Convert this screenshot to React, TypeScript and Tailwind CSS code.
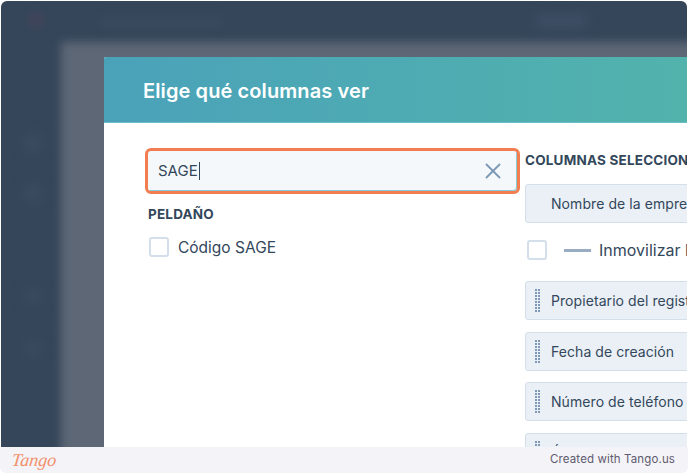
import { X } from "lucide-react";

const font = { fontFamily: '"Inter", "Noto Sans", sans-serif' };

function Grip() {
  return (
    <div className="grid grid-cols-2 gap-[1px] w-[5px] shrink-0 mr-[11px]">
      {Array.from({ length: 16 }).map((_, i) => (
        <span key={i} className="w-[2px] h-[2px] bg-[#7f98b5]" />
      ))}
    </div>
  );
}

function Row({ label, grip = true }: { label: string; grip?: boolean }) {
  return (
    <div className="h-[39px] w-[200px] shrink-0 flex items-center pl-[9px] rounded-[3px] border border-[#d5dfea] bg-[#eaf0f6] text-[14px] tracking-[0.07px] text-[#33475b] whitespace-nowrap overflow-hidden">
      {grip ? <Grip /> : <span className="w-[16px] shrink-0" />}
      <span>{label}</span>
    </div>
  );
}

function Check() {
  return <span className="block w-[20px] h-[20px] shrink-0 rounded-[3px] border-2 border-[#d3dfea] bg-white" />;
}

export default function App() {
  return (
    <div className="w-[688px] h-[473px] overflow-hidden bg-white flex flex-col" style={font}>
      <div className="relative h-[446px] shrink-0 overflow-hidden rounded-t-[6px] ml-px mr-px mt-px">
        <div className="absolute inset-0 bg-[#35465a] overflow-hidden">
          <div className="absolute left-[60px] top-[41px] right-[-20px] bottom-[-20px] bg-[#5d6776] blur-[5px]" />
          <div className="absolute left-[28px] top-[12px] w-[14px] h-[14px] rounded-full bg-[#45445a] blur-[5px]" />
          <div className="absolute left-[100px] top-[17px] w-[120px] h-[8px] bg-[#3b4c60] blur-[5px]" />
          <div className="absolute left-[535px] top-[14px] w-[50px] h-[12px] bg-[#3e5064] blur-[6px]" />
          <div className="absolute left-[22px] top-[132px] w-[20px] h-[20px] rounded-full bg-[#3a4c60] blur-[6px]" />
          <div className="absolute left-[22px] top-[182px] w-[20px] h-[20px] rounded-full bg-[#3a4c60] blur-[6px]" />
          <div className="absolute left-[22px] top-[285px] w-[20px] h-[20px] rounded-full bg-[#394a5e] blur-[6px]" />
          <div className="absolute left-[22px] top-[338px] w-[20px] h-[20px] rounded-full bg-[#394a5e] blur-[6px]" />
        </div>

        <div className="relative pl-[103px] pt-[56px] h-full">
          <div className="w-[590px] h-[390px] bg-white rounded-tl-[2px] overflow-hidden">
            <div className="h-[66px] flex items-center pl-[39px] pt-[2px] bg-gradient-to-r from-[#4aa2b9] to-[#52b3ac] border-b border-[#6cbfc9]">
              <h1 className="text-[20px] font-semibold text-white tracking-[0.1px]">Elige qué columnas ver</h1>
            </div>
            <div className="flex pl-[41px] pt-[25px]">
              <div className="w-[375px] shrink-0">
                <div className="h-[46px] w-[375px] rounded-[6px] border-[3px] border-[#f27d51] bg-[#f5f8fa] flex items-center pl-[10px] pr-[12px] shadow-[inset_-1px_-1px_0_0_#8ccbd6]">
                  <span className="text-[15px] text-[#33475b] leading-none pb-[1px]">SAGE</span>
                  <span className="w-px h-[18px] bg-[#33475b] ml-px" />
                  <X className="ml-auto -mr-px text-[#7c98b6]" size={26} strokeWidth={1.7} />
                </div>
                <div className="mt-[12px] ml-[3px] text-[13.5px] font-bold tracking-[0.2px] text-[#33475b] leading-[17px]">PELDAÑO</div>
                <div className="mt-[12px] ml-[4px] flex items-center gap-[9px]">
                  <Check />
                  <span className="text-[15.5px] text-[#33475b] pt-[1px]">Código SAGE</span>
                </div>
              </div>
              <div className="ml-[5px] w-[200px] shrink-0 flex flex-col">
                <div className="text-[13.5px] font-bold tracking-[0.2px] text-[#33475b] leading-[17px] mt-[4px] whitespace-nowrap">COLUMNAS SELECCIONADAS</div>
                <div className="mt-[15px]"><Row label="Nombre de la empresa" grip={false} /></div>
                <div className="mt-[15px] ml-[2px] flex items-center whitespace-nowrap">
                  <Check />
                  <span className="ml-[17px] w-[27px] h-[3px] shrink-0 bg-[#99acc2]" />
                  <span className="ml-[8px] text-[16px] text-[#33475b]">Inmovilizar las columnas</span>
                </div>
                <div className="mt-[19px] flex flex-col gap-[11.5px]">
                  <Row label="Propietario del registro" />
                  <Row label="Fecha de creación" />
                  <Row label="Número de teléfono" />
                  <Row label="Última actividad" />
                </div>
              </div>
            </div>
          </div>
        </div>
      </div>
      <footer className="flex-1 bg-[#f3f3f8] flex items-center justify-between pl-[12px] pr-[13px] rounded-b-[6px]">
        <span className="text-[18px] italic leading-none text-[#f2906c] -skew-x-6" style={{ fontFamily: '"Liberation Serif", serif' }}>Tango</span>
        <span className="text-[11.5px] tracking-[0.12px] text-[#5f5a6e]">Created with Tango.us</span>
      </footer>
    </div>
  );
}
